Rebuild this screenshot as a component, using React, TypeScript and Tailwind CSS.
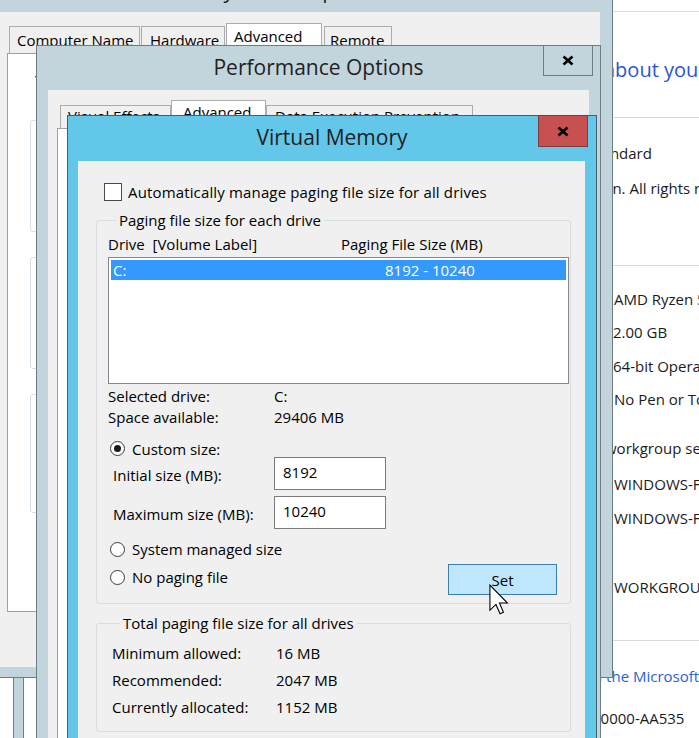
import React from "react";

const FONT = "font-['Open_Sans','Segoe_UI',sans-serif]";

function Radio({ checked }: { checked?: boolean }) {
  return (
    <span className="flex h-[15px] w-[15px] shrink-0 items-center justify-center rounded-full border border-[#3c3c3c] bg-white">
      {checked ? <span className="h-[7px] w-[7px] rounded-full bg-[#1a1a1a]" /> : null}
    </span>
  );
}

function CloseX() {
  return (
    <svg width="12" height="11" viewBox="0 0 12 11">
      <path d="M1.5 1.5 L10.5 9.5 M10.5 1.5 L1.5 9.5" stroke="#000" strokeWidth="2.6" strokeLinecap="butt" />
    </svg>
  );
}

function Cursor() {
  return (
    <svg width="20" height="31" viewBox="0 0 13 20" className="absolute left-[489px] top-[584px]">
      <path
        d="M0.6 0.6 L0.6 17 L4.5 13.2 L7.2 19.3 L9.4 18.3 L6.8 12.3 L12 12.3 Z"
        fill="#fff"
        stroke="#000"
        strokeWidth="0.7"
        strokeLinejoin="miter"
      />
    </svg>
  );
}

export default function App() {
  return (
    <div className={`relative h-[738px] w-[699px] overflow-hidden bg-white text-[15px] leading-[20px] text-black ${FONT}`}>
      {/* System control panel window (behind, right side) */}
      <div className="absolute isolate left-[600px] top-0 flex h-[738px] w-[99px] flex-col overflow-hidden whitespace-nowrap bg-white text-[#1b1b1b]">
        <div className="h-[11px]" />
        <div className="h-px bg-[#dadada]" />
        <div className="ml-[4px] mt-[44px] h-[28px] text-[20px] leading-[28px] text-[#2a55d4]">about your computer</div>
        <div className="mt-[33px] h-px bg-[#dadada]" />
        <div className="ml-[-12px] mt-[25px] h-[20px]">Standard</div>
        <div className="ml-[-63px] mt-[15px] h-[20px]">Corporation. All rights reserved.</div>
        <div className="mt-[67px] h-px bg-[#dadada]" />
        <div className="ml-[14px] mt-[23px] h-[20px]">AMD Ryzen 5 3600 6-Core Processor</div>
        <div className="ml-[13px] mt-[13px] h-[20px]">2.00 GB</div>
        <div className="ml-[13px] mt-[14px] h-[20px]">64-bit Operating System</div>
        <div className="ml-[14px] mt-[13px] h-[20px]">No Pen or Touch Input</div>
        <div className="ml-[5px] mt-[29px] h-[20px]">workgroup settings</div>
        <div className="ml-[14px] mt-[16px] h-[20px]">WINDOWS-FOV4G4E</div>
        <div className="ml-[14px] mt-[14px] h-[20px]">WINDOWS-FOV4G4E</div>
        <div className="ml-[14px] mt-[49px] h-[20px]">WORKGROUP</div>
        <div className="mt-[43px] h-px bg-[#dadada]" />
        <div className="ml-[-33px] mt-[25px] h-[20px] text-[#2a63d1]">Read the Microsoft Software License Terms</div>
        <div className="ml-[-8px] mt-[22px] h-[20px]">00000-AA535</div>
      </div>

      {/* strip of another window bottom-left */}
      <div className="absolute left-[13px] top-[677px] h-[61px] w-[11px] border-x border-[#6d7b82] bg-[#c3d5dc]" />

      {/* System Properties */}
      <div className="absolute isolate left-[-11px] top-[-31px] flex h-[709px] w-[624px] flex-col border border-[#6d7b82] bg-[#c3d5dc]">
        <div className="flex h-[42px] items-center justify-center pb-[2px] text-[21px] text-[#1f1f1f]">System Properties</div>
        <div className="ml-[10px] mr-[12px] flex h-[655px] flex-col bg-[#f0f0f0]">
          <div className="mt-[11px] flex h-[30px] items-end pl-[9px] whitespace-nowrap">
            <div className="flex h-[27px] w-[131px] items-start border border-b-0 border-[#acacac] bg-[#f0f0f0] pl-[7px] pt-[3px]">Computer Name</div>
            <div className="ml-px flex h-[27px] w-[84px] items-start border border-b-0 border-[#acacac] bg-[#f0f0f0] pl-[8px] pt-[3px]">Hardware</div>
            <div className="relative z-10 mb-[-1px] ml-px flex h-[31px] w-[96px] items-start border border-b-0 border-[#acacac] bg-white pl-[7px] pt-[2px]">Advanced</div>
            <div className="ml-[2px] flex h-[27px] w-[68px] items-start border border-b-0 border-[#acacac] bg-[#f0f0f0] pl-[5px] pt-[3px]">Remote</div>
          </div>
          <div className="ml-[7px] flex h-[559px] w-[589px] flex-col border border-[#a0a0a0] bg-white">
            <div className="ml-[27px] mt-[16px] h-[20px] whitespace-nowrap">You must be logged on as an Administrator to make most of these changes.</div>
            <div className="ml-[22px] mt-[30px] h-[112px] w-[560px] rounded-[3px] border border-[#d5dfe5]" />
            <div className="ml-[22px] mt-[25px] h-[112px] w-[560px] rounded-[3px] border border-[#d5dfe5]" />
            <div className="ml-[22px] mt-[25px] h-[119px] w-[560px] rounded-[3px] border border-[#d5dfe5]" />
          </div>
        </div>
      </div>

      {/* Performance Options */}
      <div className="absolute isolate left-[36px] top-[45px] flex h-[720px] w-[565px] flex-col border border-[#6d7b82] bg-[#c3d5dc]">
        <div className="grid h-[44px] grid-cols-[1fr_auto_1fr]">
          <div />
          <div className="self-center pb-[3px] text-[21px] text-[#1f1f1f]">Performance Options</div>
          <div className="flex justify-end">
            <div className="-mt-px mr-[7px] flex h-[31px] w-[50px] items-center justify-center border border-[#6d7b82] bg-[#c3d5dc]">
              <CloseX />
            </div>
          </div>
        </div>
        <div className="mx-[11px] flex flex-1 flex-col bg-[#f0f0f0]">
          <div className="mt-[10px] flex h-[28px] items-end pl-[12px] whitespace-nowrap">
            <div className="flex h-[23px] w-[111px] items-start border border-b-0 border-[#acacac] bg-[#f0f0f0] pl-[7px]">Visual Effects</div>
            <div className="relative z-10 mb-[-1px] flex h-[29px] w-[95px] items-start border border-b-0 border-[#acacac] bg-white pl-[11px] pt-[1px]">Advanced</div>
            <div className="flex h-[23px] w-[207px] items-start border border-b-0 border-[#acacac] bg-[#f0f0f0] pl-[8px]">Data Execution Prevention</div>
          </div>
          <div className="ml-[9px] w-[525px] flex-1 border border-[#a0a0a0] bg-white" />
        </div>
      </div>

      {/* Virtual Memory */}
      <div className="absolute isolate left-[67px] top-[115px] flex h-[640px] w-[530px] flex-col border border-[#41606c] bg-[#63c7ea]">
        <div className="grid h-[45px] grid-cols-[1fr_auto_1fr]">
          <div />
          <div className="self-center pb-[3px] text-[21px] text-[#1f1f1f]">Virtual Memory</div>
          <div className="flex justify-end">
            <div className="-mt-px mr-[8px] flex h-[32px] w-[50px] items-center justify-center border border-[#7d3a36] bg-[#c75050]">
              <CloseX />
            </div>
          </div>
        </div>
        <div className="ml-[10px] mr-[11px] flex flex-1 flex-col bg-[#f0f0f0] pl-[18px] whitespace-nowrap">
          <div className="ml-[8px] mt-[22px] flex h-[18px] items-center gap-[6px]">
            <span className="h-[18px] w-[18px] border border-[#4a4a4a] bg-white" />
            <span className="tracking-[0.15px]">Automatically manage paging file size for all drives</span>
          </div>

          <fieldset className="mt-[9px] w-[475px] rounded-[3px] border border-[#d9dde0] pb-[8px] pl-[11px] pr-px">
            <legend className="ml-[8px] px-[3px] leading-[20px]">Paging file size for each drive</legend>
            <div className="mt-[4px] flex h-[20px]">
              <span className="w-[233px] whitespace-pre">Drive  [Volume Label]</span>
              <span>Paging File Size (MB)</span>
            </div>
            <div className="mt-[3px] h-[127px] w-[461px] border border-[#828790] bg-white p-[2px]">
              <div className="flex h-[20px] items-center bg-[#3399ff] pl-[2px] text-white">
                <span className="w-[272px]">C:</span>
                <span>8192 - 10240</span>
              </div>
            </div>
            <div className="mt-[2px] grid grid-cols-[166px_auto] leading-[21px]">
              <span>Selected drive:</span>
              <span>C:</span>
              <span>Space available:</span>
              <span>29406 MB</span>
            </div>
            <div className="ml-[2px] mt-[11px] flex h-[19px] items-center gap-[7px]">
              <Radio checked />
              <span>Custom size:</span>
            </div>
            <div className="mt-[-1px] flex h-[33px] items-center">
              <span className="w-[166px] pl-[5px] pt-[3px]">Initial size (MB):</span>
              <div className="flex h-[33px] w-[112px] items-center border border-[#7a7a7a] bg-white pb-[4px] pl-[8px]">8192</div>
            </div>
            <div className="mt-[6px] flex h-[33px] items-center">
              <span className="w-[166px] pl-[5px] pt-[3px]">Maximum size (MB):</span>
              <div className="flex h-[33px] w-[112px] items-center border border-[#7a7a7a] bg-white pb-[4px] pl-[8px]">10240</div>
            </div>
            <div className="ml-[2px] mt-[10px] flex h-[20px] items-center gap-[7px]">
              <Radio />
              <span>System managed size</span>
            </div>
            <div className="mt-[5px] flex h-[31px] items-center">
              <div className="ml-[2px] flex items-center gap-[7px] pb-[5px]">
                <Radio />
                <span>No paging file</span>
              </div>
              <div className="ml-auto mr-[12px] flex h-[31px] w-[109px] items-center justify-center border border-[#3c7fb1] bg-[#bee6fd]">Set</div>
            </div>
          </fieldset>

          <fieldset className="mt-[9px] w-[475px] rounded-[3px] border border-[#d9dde0] pb-[10px] pl-[15px]">
            <legend className="ml-[8px] px-[3px] leading-[20px]">Total paging file size for all drives</legend>
            <div className="mt-[7px] grid grid-cols-[164px_auto] leading-[27px]">
              <span>Minimum allowed:</span>
              <span>16 MB</span>
              <span>Recommended:</span>
              <span>2047 MB</span>
              <span>Currently allocated:</span>
              <span>1152 MB</span>
            </div>
          </fieldset>
        </div>
      </div>

      <Cursor />
    </div>
  );
}
